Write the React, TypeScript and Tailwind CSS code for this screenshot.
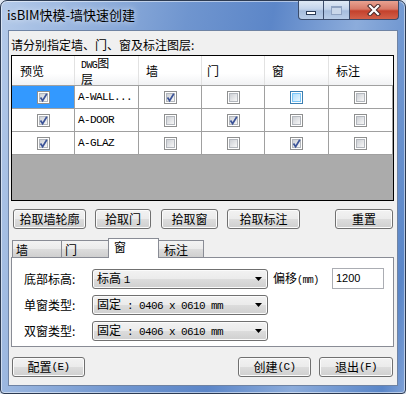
import type { ReactNode } from "react";

const rows = [
  { name: "A-WALL...", pv: true, sel: true, cells: [true, false, "hot", false] },
  { name: "A-DOOR", pv: true, sel: false, cells: [false, true, false, false] },
  { name: "A-GLAZ", pv: true, sel: false, cells: [false, false, true, false] },
];

function Mono({ children, size = "10" }: { children: ReactNode; size?: "9" | "10" }) {
  return (
    <span
      className={
        size === "9"
          ? "font-['Liberation_Mono',monospace] text-[10px] tracking-[-0.6px]"
          : "font-['Liberation_Mono',monospace] text-[11px] tracking-[-0.6px]"
      }
    >
      {children}
    </span>
  );
}

function Check({ on, hot }: { on?: boolean; hot?: boolean }) {
  return (
    <span
      className={
        hot
          ? "relative flex h-[13px] w-[13px] items-center justify-center border border-[#3c7fb1] bg-white"
          : "relative flex h-[13px] w-[13px] items-center justify-center border border-[#8e8f8f] bg-white"
      }
    >
      <span
        className={
          hot
            ? "block h-[9px] w-[9px] border border-[#79c6f9] bg-[linear-gradient(135deg,#b1dffd,#e9f7fe)]"
            : "block h-[9px] w-[9px] border border-[#b3b7bd] bg-[linear-gradient(135deg,#cdd0d5,#f7f7f7)]"
        }
      />
      {on && (
        <svg className="absolute left-0 top-0" width="11" height="11" viewBox="0 0 11 11">
          <path d="M2.5 5.5 L4.6 8.6 L8.8 1.8" fill="none" stroke="#3b5398" strokeWidth="1.7" />
        </svg>
      )}
    </span>
  );
}

function Btn({ w, children }: { w: string; children: ReactNode }) {
  return (
    <div
      className={`${w} flex h-[20px] items-center justify-center rounded-[3px] border border-[#707070] bg-[linear-gradient(#f2f2f2_0%,#ebebeb_50%,#dddddd_50%,#cfcfcf_100%)] leading-[14px] shadow-[inset_0_0_0_1px_#fbfbfb]`}
    >
      {children}
    </div>
  );
}

function Combo({ children }: { children: ReactNode }) {
  return (
    <div className="flex h-[20px] w-[176px] items-center justify-between rounded-[3px] border border-[#707070] bg-[linear-gradient(#f2f2f2_0%,#ebebeb_50%,#dddddd_50%,#cfcfcf_100%)] pl-[4px] pr-[5px] leading-[14px] shadow-[inset_0_0_0_1px_#fbfbfb]">
      <span className="flex items-baseline whitespace-pre">{children}</span>
      <svg width="7" height="4" viewBox="0 0 7 4">
        <path d="M0 0H7L3.5 4Z" fill="#000" />
      </svg>
    </div>
  );
}

export default function App() {
  return (
    <div className="h-[394px] w-[406px] bg-[#dfe7f2] font-['Noto_Sans_CJK_SC',sans-serif] text-[12px] text-black">
      <div className="flex h-full flex-col rounded-t-[7px] rounded-b-[4px] border border-[#2d3b52] bg-[linear-gradient(100deg,#b4cae9_0%,#9ab6df_16%,#6f95cf_40%,#5c86c8_58%,#8cacdb_76%,#5a86c8_95%,#7fa1d6_100%)] shadow-[inset_0_0_0_1px_rgba(255,255,255,0.5)]">
        {/* title bar */}
        <div className="flex h-[29px] items-start justify-between">
          <div className="ml-[6px] mt-[5px] text-[13px] leading-[17px] [text-shadow:0_0_6px_rgba(255,255,255,0.9)]">
            isBIM快模-墙快速创建
          </div>
          <div className="mr-[6px] flex">
            <div className="flex h-[19px] w-[26px] justify-center rounded-bl-[4px] border border-t-0 border-[#3b4c6b] bg-[linear-gradient(#dfe9f5_0%,#c3d4eb_45%,#a6bddd_55%,#b9cde8_100%)]">
              <span className="mt-[10px] block h-[4px] w-[10px] border border-[#2a3a56] bg-white" />
            </div>
            <div className="flex h-[19px] w-[26px] justify-center border border-l-0 border-t-0 border-[#3b4c6b] bg-[linear-gradient(#dfe9f5_0%,#c3d4eb_45%,#a6bddd_55%,#b9cde8_100%)]">
              <span className="mt-[5px] block h-[9px] w-[11px] border border-t-2 border-[#8fa3c2] bg-[#c9d7ea]" />
            </div>
            <div className="flex h-[19px] w-[49px] items-center justify-center rounded-br-[4px] border border-l-0 border-t-0 border-[#3b4c6b] bg-[linear-gradient(#e8a291_0%,#d77a68_45%,#c4412c_55%,#d2614a_100%)]">
              <svg width="14" height="12" viewBox="0 0 14 12">
                <path d="M3 2L11 10M11 2L3 10" stroke="#4a2a2a" strokeWidth="4.2" strokeLinecap="square" />
                <path d="M3 2L11 10M11 2L3 10" stroke="#fff" strokeWidth="2.2" strokeLinecap="square" />
              </svg>
            </div>
          </div>
        </div>

        {/* client area */}
        <div className="mx-[7px] mb-[7px] flex flex-1 flex-col border border-[#6f83a3] bg-[#f0f0f0] pl-[2px] pr-[3px]">
          <div className="mt-[6px] h-[16px] leading-[16px]">请分别指定墙、门、窗及标注图层:</div>

          {/* layer grid */}
          <div className="mt-[2px] flex h-[146px] flex-col border border-black">
            <div className="grid h-[30px] grid-cols-[63px_64px_63px_63px_64px_1fr] border-b border-[#a0a0a0] bg-[linear-gradient(#ffffff_0%,#ffffff_60%,#f1f2f4_100%)]">
              <div className="flex items-center border-r border-[#e2e2e2] pl-[8px]">预览</div>
              <div className="flex flex-col justify-center border-r border-[#e2e2e2] pl-[6px] leading-[13px]">
                <span>
                  <Mono size="9">DWG</Mono>图
                </span>
                <span>层</span>
              </div>
              <div className="flex items-center border-r border-[#e2e2e2] pl-[7px]">墙</div>
              <div className="flex items-center border-r border-[#e2e2e2] pl-[5px]">门</div>
              <div className="flex items-center border-r border-[#e2e2e2] pl-[7px]">窗</div>
              <div className="flex items-center pl-[7px]">标注</div>
            </div>
            {rows.map((r) => (
              <div key={r.name} className="grid h-[23px] grid-cols-[63px_64px_63px_63px_64px_1fr] bg-white">
                <div
                  className={
                    r.sel
                      ? "flex items-center justify-center border-b border-r border-[#a0a0a0] bg-[#3399ff]"
                      : "flex items-center justify-center border-b border-r border-[#a0a0a0]"
                  }
                >
                  <Check on={r.pv} />
                </div>
                <div className="flex items-center border-b border-r border-[#a0a0a0] pl-[3px]">
                  <Mono>{r.name}</Mono>
                </div>
                {r.cells.map((c, i) => (
                  <div key={i} className="flex items-center justify-center border-b border-r border-[#a0a0a0]">
                    <Check on={c === true} hot={c === "hot"} />
                  </div>
                ))}
              </div>
            ))}
            <div className="flex-1 bg-[#ababab]" />
          </div>

          {/* pick buttons */}
          <div className="mt-[8px] flex">
            <div className="ml-[2px]">
              <Btn w="w-[73px]">拾取墙轮廓</Btn>
            </div>
            <div className="ml-[9px]">
              <Btn w="w-[56px]">拾取门</Btn>
            </div>
            <div className="ml-[10px]">
              <Btn w="w-[57px]">拾取窗</Btn>
            </div>
            <div className="ml-[9px]">
              <Btn w="w-[73px]">拾取标注</Btn>
            </div>
            <div className="ml-auto mr-[1px]">
              <Btn w="w-[58px]">重置</Btn>
            </div>
          </div>

          {/* tabs */}
          <div className="mt-[9px] flex h-[19px] items-end pl-[1px] leading-[14px]">
            <div className="h-[17px] w-[50px] border border-b-0 border-[#898c95] bg-[linear-gradient(#f3f3f3_0%,#ebebeb_50%,#dddddd_50%,#cfcfcf_100%)] pl-[3px] pt-[2px]">
              墙
            </div>
            <div className="-ml-px h-[17px] w-[48px] border border-b-0 border-[#898c95] bg-[linear-gradient(#f3f3f3_0%,#ebebeb_50%,#dddddd_50%,#cfcfcf_100%)] pl-[3px] pt-[2px]">
              门
            </div>
            <div className="relative z-10 -mb-px -ml-px h-[20px] w-[51px] border border-b-0 border-[#898c95] bg-white pl-[5px] pt-[1px]">
              窗
            </div>
            <div className="-ml-px h-[17px] w-[46px] border border-b-0 border-[#898c95] bg-[linear-gradient(#f3f3f3_0%,#ebebeb_50%,#dddddd_50%,#cfcfcf_100%)] pl-[5px] pt-[2px]">
              标注
            </div>
          </div>
          <div className="flex h-[90px] flex-col gap-[6px] border border-[#898c95] bg-white pl-[12px] pt-[10px]">
            <div className="flex items-center">
              <div className="w-[68px]">底部标高:</div>
              <Combo>
                标高 <Mono>1</Mono>
              </Combo>
              <div className="ml-[5px] w-[59px]">
                偏移<Mono size="9">(mm)</Mono>
              </div>
              <div className="flex h-[21px] w-[52px] items-center border border-[#abadb3] bg-white pl-[3px] font-['Liberation_Sans',sans-serif] text-[11px]">
                1200
              </div>
            </div>
            <div className="flex items-center">
              <div className="w-[68px]">单窗类型:</div>
              <Combo>
                固定<Mono> : 0406 x 0610 mm</Mono>
              </Combo>
            </div>
            <div className="flex items-center">
              <div className="w-[68px]">双窗类型:</div>
              <Combo>
                固定<Mono> : 0406 x 0610 mm</Mono>
              </Combo>
            </div>
          </div>

          {/* bottom buttons */}
          <div className="mt-[10px] flex">
            <div className="ml-[1px]">
              <Btn w="w-[73px]">
                配置<Mono>(E)</Mono>
              </Btn>
            </div>
            <div className="ml-auto">
              <Btn w="w-[73px]">
                创建<Mono>(C)</Mono>
              </Btn>
            </div>
            <div className="ml-[8px] mr-[1px]">
              <Btn w="w-[74px]">
                退出<Mono>(F)</Mono>
              </Btn>
            </div>
          </div>
        </div>
      </div>
    </div>
  );
}
